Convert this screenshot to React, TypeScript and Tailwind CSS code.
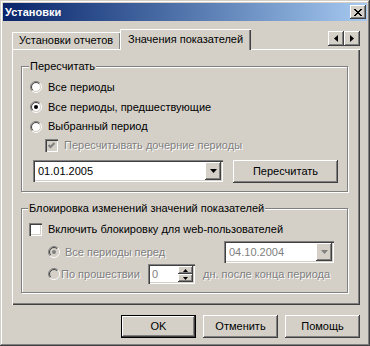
import type { ReactNode } from "react";

// classic 3D edges
const RAISED =
  "shadow-[inset_-1px_-1px_0_#404040,inset_1px_1px_0_#fff,inset_-2px_-2px_0_#808080]";
const SUNKEN =
  "shadow-[inset_1px_1px_0_#808080,inset_2px_2px_0_#404040,inset_-1px_-1px_0_#fff,inset_-2px_-2px_0_#d4d0c8]";
const GRAYTEXT = "text-[#808080] [text-shadow:1px_1px_0_#fff]";

const X_ROWS: [number, number, number][] = [
  [0, 0, 2], [6, 0, 2],
  [1, 1, 2], [5, 1, 2],
  [2, 2, 4],
  [3, 3, 2],
  [2, 4, 4],
  [1, 5, 2], [5, 5, 2],
  [0, 6, 2], [6, 6, 2],
];

function Radio({ checked = false, disabled = false }: { checked?: boolean; disabled?: boolean }) {
  const arc = (r: number, topLeft: boolean) => {
    const a = r * Math.SQRT1_2;
    return topLeft
      ? `M${6 - a} ${6 + a}A${r} ${r} 0 0 1 ${6 + a} ${6 - a}`
      : `M${6 + a} ${6 - a}A${r} ${r} 0 0 1 ${6 - a} ${6 + a}`;
  };
  return (
    <svg width="12" height="12" viewBox="0 0 12 12" className="shrink-0">
      <circle cx="6" cy="6" r="4.5" fill={disabled ? "#d4d0c8" : "#fff"} />
      <path d={arc(5.5, true)} stroke="#808080" fill="none" />
      <path d={arc(5.5, false)} stroke="#fff" fill="none" />
      <path d={arc(4.5, true)} stroke="#404040" fill="none" />
      <path d={arc(4.5, false)} stroke="#d4d0c8" fill="none" />
      {checked && <circle cx="6" cy="6" r="2" fill={disabled ? "#808080" : "#000"} />}
    </svg>
  );
}

function Check({ checked = false, disabled = false }: { checked?: boolean; disabled?: boolean }) {
  return (
    <span
      className={`w-[13px] h-[13px] shrink-0 flex items-center justify-center ${SUNKEN} ${
        disabled ? "bg-[#d4d0c8]" : "bg-white"
      }`}
    >
      {checked && (
        <svg width="7" height="7" viewBox="0 0 7 7">
          <polyline points="0.5,3 2.5,5 6.5,1" fill="none" stroke={disabled ? "#808080" : "#000"} strokeWidth="2.2" />
        </svg>
      )}
    </span>
  );
}

function DropBtn({ disabled = false }: { disabled?: boolean }) {
  return (
    <span className={`w-[16px] h-full shrink-0 flex items-center justify-center bg-[#d4d0c8] ${RAISED}`}>
      <svg width="7" height="4" viewBox="0 0 7 4">
        <path d="M0 0h7L3.5 4z" fill={disabled ? "#808080" : "#000"} />
      </svg>
    </span>
  );
}

function Btn({ children, def = false, className = "" }: { children: ReactNode; def?: boolean; className?: string }) {
  return (
    <div
      className={`flex items-center justify-center bg-[#d4d0c8] ${RAISED} ${
        def ? "border border-black" : ""
      } ${className}`}
    >
      {children}
    </div>
  );
}

function Arrow({ dir }: { dir: "l" | "r" }) {
  return (
    <span className={`w-[16px] h-[15px] flex items-center justify-center bg-[#d4d0c8] ${RAISED}`}>
      <svg width="4" height="7" viewBox="0 0 4 7">
        <path d={dir === "l" ? "M4 0v7L0 3.5z" : "M0 0v7L4 3.5z"} fill="#000" />
      </svg>
    </span>
  );
}

export default function App() {
  return (
    <div className="w-[370px] h-[346px] p-[3px] flex flex-col bg-[#d4d0c8] text-black text-[11px] font-['Liberation_Sans',Arial,sans-serif] shadow-[inset_-1px_-1px_0_#404040,inset_1px_1px_0_#d4d0c8,inset_-2px_-2px_0_#808080,inset_2px_2px_0_#fff]">
      {/* Title bar */}
      <div className="h-[18px] flex items-center justify-between pl-[2px] pr-[1px] bg-linear-to-r from-[#0a246a] to-[#a6caf0]">
        <span className="text-white font-bold">Установки</span>
        <span className={`w-[16px] h-[14px] flex items-center justify-center bg-[#d4d0c8] ${RAISED}`}>
          <svg width="8" height="7" viewBox="0 0 8 7">
            {X_ROWS.map(([x, y, w], i) => (
              <rect key={i} x={x} y={y} width={w} height="1" fill="#000" />
            ))}
          </svg>
        </span>
      </div>

      {/* Tabs */}
      <div className="mt-[8px] ml-[9px] w-[348px] h-[20px] flex items-end">
        <div className="h-[17px] w-[108px] flex items-center pl-[7px] shadow-[inset_1px_1px_0_#fff,inset_-1px_0_0_#808080]">
          Установки отчетов
        </div>
        <div className="relative z-10 -mb-px h-[21px] w-[131px] flex items-center pl-[8px] pb-[1px] bg-[#d4d0c8] shadow-[inset_1px_1px_0_#fff,inset_-1px_0_0_#404040,inset_-2px_0_0_#808080]">
          Значения показателей
        </div>
        <div className="flex-1" />
        <div className="self-start mt-[2px] flex">
          <Arrow dir="l" />
          <Arrow dir="r" />
        </div>
      </div>

      {/* Tab panel */}
      <div className="ml-[9px] w-[348px] h-[256px] pt-[17px] pl-[9px] shadow-[inset_1px_1px_0_#fff,inset_-1px_-1px_0_#404040,inset_-2px_-2px_0_#808080]">
        {/* Пересчитать */}
        <div className="relative w-[327px] h-[126px] pt-[10px] flex flex-col border border-[#808080] shadow-[inset_1px_1px_0_#fff,1px_1px_0_#fff]">
          <span className="absolute -top-[7px] left-[7px] px-px bg-[#d4d0c8] leading-[13px]">Пересчитать</span>
          <div className="h-[20px] pl-[8px] flex items-center gap-[6px]">
            <Radio />
            <span>Все периоды</span>
          </div>
          <div className="h-[20px] pl-[8px] flex items-center gap-[6px]">
            <Radio checked />
            <span>Все периоды, предшествующие</span>
          </div>
          <div className="h-[19px] pl-[8px] flex items-center gap-[6px]">
            <Radio />
            <span>Выбранный период</span>
          </div>
          <div className="h-[19px] pl-[23px] flex items-center gap-[6px]">
            <Check checked disabled />
            <span className={GRAYTEXT}>Пересчитывать дочерние периоды</span>
          </div>
          <div className="mt-[5px] pl-[11px] flex items-start gap-[10px]">
            <div className={`h-[22px] w-[190px] p-[2px] flex bg-white ${SUNKEN}`}>
              <span className="flex-1 pl-[3px] flex items-center">01.01.2005</span>
              <DropBtn />
            </div>
            <Btn className="h-[23px] w-[105px]">Пересчитать</Btn>
          </div>
        </div>

        {/* Блокировка */}
        <div className="relative mt-[16px] w-[327px] h-[85px] pt-[10px] flex flex-col border border-[#808080] shadow-[inset_1px_1px_0_#fff,1px_1px_0_#fff]">
          <span className="absolute -top-[7px] left-[6px] px-px bg-[#d4d0c8] leading-[13px]">
            Блокировка изменений значений показателей
          </span>
          <div className="h-[20px] pl-[7px] flex items-center gap-[6px]">
            <Check />
            <span>Включить блокировку для web-пользователей</span>
          </div>
          <div className="mt-[2px] h-[22px] pl-[26px] pr-[13px] flex items-center gap-[5px]">
            <Radio checked disabled />
            <span className={GRAYTEXT}>Все периоды перед</span>
            <div className={`ml-auto h-[22px] w-[110px] p-[2px] flex bg-white ${SUNKEN}`}>
              <span className="flex-1 pl-[3px] flex items-center text-[#808080]">04.10.2004</span>
              <DropBtn disabled />
            </div>
          </div>
          <div className="mt-px h-[20px] pl-[26px] flex items-center">
            <Radio disabled />
            <span className={`ml-px w-[87px] ${GRAYTEXT}`}>По прошествии</span>
            <div className={`h-[20px] w-[47px] p-[2px] flex bg-white ${SUNKEN}`}>
              <span className="flex-1 pl-[2px] flex items-center text-[#808080]">0</span>
              <div className="w-[15px] flex flex-col">
                <span className={`flex-1 flex items-center justify-center bg-[#d4d0c8] ${RAISED}`}>
                  <svg width="5" height="3" viewBox="0 0 5 3">
                    <path d="M0 3h5L2.5 0z" fill="#000" />
                  </svg>
                </span>
                <span className={`flex-1 flex items-center justify-center bg-[#d4d0c8] ${RAISED}`}>
                  <svg width="5" height="3" viewBox="0 0 5 3">
                    <path d="M0 0h5L2.5 3z" fill="#000" />
                  </svg>
                </span>
              </div>
            </div>
            <span className={`ml-[8px] ${GRAYTEXT}`}>дн. после конца периода</span>
          </div>
        </div>
      </div>

      {/* Dialog buttons */}
      <div className="mt-[10px] ml-[9px] w-[348px] flex justify-end gap-[7px]">
        <Btn def className="h-[23px] w-[75px]">OK</Btn>
        <Btn className="h-[23px] w-[75px]">Отменить</Btn>
        <Btn className="h-[23px] w-[75px]">Помощь</Btn>
      </div>
    </div>
  );
}
